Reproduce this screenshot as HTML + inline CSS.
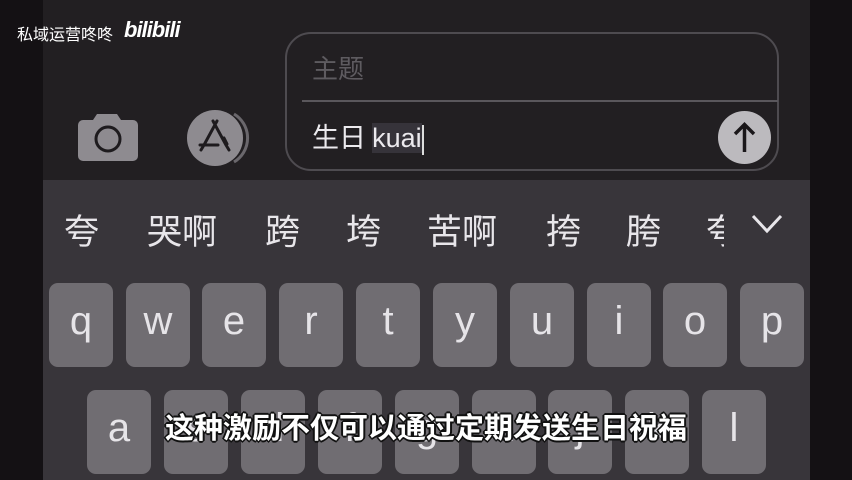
<!DOCTYPE html>
<html><head><meta charset="utf-8"><style>
*{margin:0;padding:0;box-sizing:border-box}
body{width:852px;height:480px;overflow:hidden;background:#141114;position:relative;font-family:"Liberation Sans","Noto Sans CJK SC",sans-serif}
.main{position:absolute;left:43px;top:0;width:767px;height:480px;background:#221f22}
.kb{position:absolute;left:43px;top:180px;width:767px;height:300px;background:#38353a}
.abs{position:absolute}
.key{position:absolute;width:64px;height:84px;background:#706d72;border-radius:9px;color:#e6e4e8;font-size:40px;text-align:center;line-height:76px}
.cand{position:absolute;top:208px;font-size:35px;color:#e8e6ea;font-family:"Noto Sans CJK SC",sans-serif;line-height:44px}
</style></head><body>
<div class="main"></div>
<div class="kb"></div>
<div class="abs" style="left:17px;top:23px;color:#fff;font-size:16px;font-family:'Noto Sans CJK SC',sans-serif;line-height:20px">私域运营咚咚</div>
<div class="abs" style="left:124px;top:17px;color:#fff;font-size:22px;font-weight:bold;font-style:italic;letter-spacing:-1px;line-height:26px">bilibili</div>
<!-- camera -->
<svg class="abs" style="left:77px;top:112px" width="62" height="50" viewBox="0 0 62 50">
<path d="M20 2h20l4 6h12a5 5 0 0 1 5 5v31a5 5 0 0 1-5 5H6a5 5 0 0 1-5-5V13a5 5 0 0 1 5-5h10z" fill="#8e8b90"/>
<circle cx="31" cy="27" r="12" fill="none" stroke="#1e1b1e" stroke-width="3"/>
</svg>
<!-- app store -->
<svg class="abs" style="left:180px;top:108px" width="72" height="60" viewBox="0 0 72 60">
<path d="M54 6a28 28 0 0 1 0 48" fill="none" stroke="#6a676c" stroke-width="3"/>
<circle cx="35" cy="30" r="28" fill="#8e8b90"/>
<path d="M37 13L24 37M33 13l13 24M20 37h18M44 30l3 6M24 37l-3 5M46 37l3 5" stroke="#1e1b1e" stroke-width="3" stroke-linecap="round" fill="none"/>
</svg>
<!-- textbox -->
<div class="abs" style="left:285px;top:32px;width:494px;height:139px;border:2px solid #4e4b50;border-radius:26px"></div>
<div class="abs" style="left:302px;top:100px;width:476px;height:2px;background:#5a575c"></div>
<div class="abs" style="left:312px;top:52px;color:#5e5b60;font-size:26px;font-family:'Noto Sans CJK SC',sans-serif;line-height:32px">主题</div>
<div class="abs" style="left:312px;top:119px;color:#eceaee;font-size:27px;font-family:'Noto Sans CJK SC',sans-serif;line-height:34px">生日 <span style="background:#36333a;font-family:'Liberation Sans',sans-serif">kuai</span><span style="display:inline-block;width:2px;height:30px;background:#ddd;vertical-align:middle"></span></div>
<svg class="abs" style="left:717px;top:110px" width="55" height="55" viewBox="0 0 55 55">
<circle cx="27.5" cy="27.5" r="26.5" fill="#bcbabe"/>
<path d="M27.5 42V15M18 24l9.5-9.5L37 24" stroke="#1a171a" stroke-width="3.5" fill="none"/>
</svg>
<!-- candidates -->
<div class="cand" style="left:64px">夸</div>
<div class="cand" style="left:147px">哭啊</div>
<div class="cand" style="left:265px">跨</div>
<div class="cand" style="left:346px">垮</div>
<div class="cand" style="left:427px">苦啊</div>
<div class="cand" style="left:546px">挎</div>
<div class="cand" style="left:626px">胯</div>
<div class="cand" style="left:706px;width:18px;overflow:hidden">夸</div>
<svg class="abs" style="left:751px;top:213px" width="32" height="22" viewBox="0 0 32 22"><path d="M2 3l14 15L30 3" stroke="#e8e6ea" stroke-width="3" fill="none"/></svg>
<!-- row1 -->
<div class="key" style="left:49px;top:283px">q</div>
<div class="key" style="left:126px;top:283px">w</div>
<div class="key" style="left:202px;top:283px">e</div>
<div class="key" style="left:279px;top:283px">r</div>
<div class="key" style="left:356px;top:283px">t</div>
<div class="key" style="left:433px;top:283px">y</div>
<div class="key" style="left:510px;top:283px">u</div>
<div class="key" style="left:587px;top:283px">i</div>
<div class="key" style="left:663px;top:283px">o</div>
<div class="key" style="left:740px;top:283px">p</div>
<!-- row2 -->
<div class="key" style="left:87px;top:390px">a</div>
<div class="key" style="left:164px;top:390px">s</div>
<div class="key" style="left:241px;top:390px">d</div>
<div class="key" style="left:318px;top:390px">f</div>
<div class="key" style="left:395px;top:390px">g</div>
<div class="key" style="left:472px;top:390px">h</div>
<div class="key" style="left:548px;top:390px">j</div>
<div class="key" style="left:625px;top:390px">k</div>
<div class="key" style="left:702px;top:390px">l</div>
<!-- subtitle -->
<div class="abs" style="left:0;width:852px;top:407px;text-align:center;color:#fff;font-size:29px;font-weight:bold;font-family:'Noto Sans CJK SC',sans-serif;line-height:38px;text-shadow:-2px 0 #111,2px 0 #111,0 -2px #111,0 2px #111,-1px -1px #111,1px 1px #111,-1px 1px #111,1px -1px #111">这种激励不仅可以通过定期发送生日祝福</div>
</body></html>
